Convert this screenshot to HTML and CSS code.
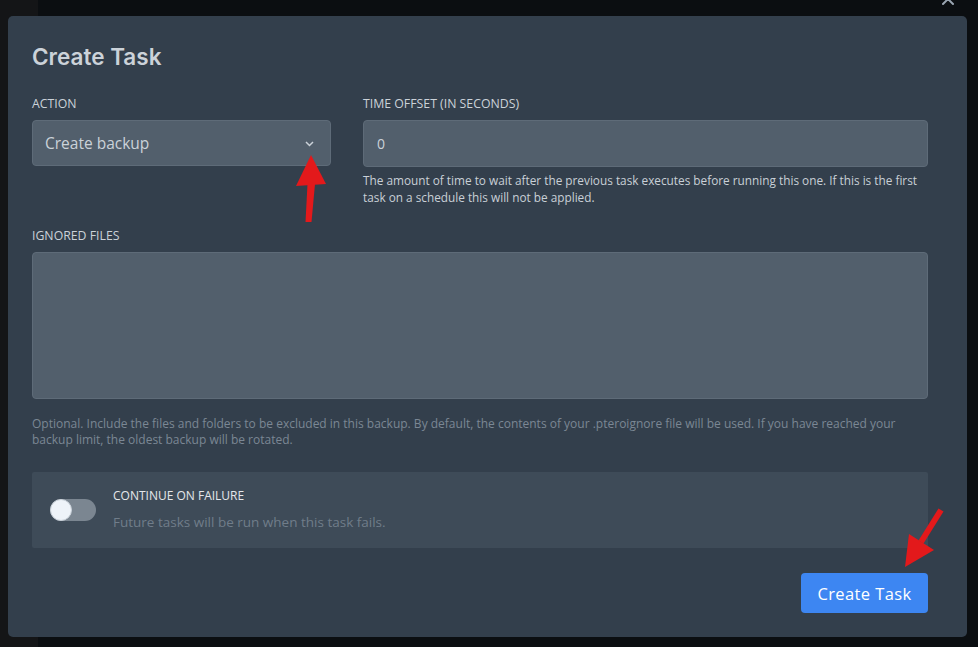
FILE: index.html
```html
<!DOCTYPE html>
<html lang="en">
<head>
<meta charset="utf-8">
<title>Create Task</title>
<link rel="stylesheet" href="styles.css">
</head>
<body>
<div class="backdrop">
  <button class="close" aria-label="Close">
    <svg width="16" height="16" viewBox="0 0 16 16"><path d="M3 3 L13 13 M13 3 L3 13" stroke="#9aa5b1" stroke-width="2" stroke-linecap="round" fill="none"/></svg>
  </button>
  <div class="modal">
    <h2 class="title">Create Task</h2>
    <div class="row">
      <div class="field">
        <label class="label">Action</label>
        <div class="select">
          <span>Create backup</span>
          <svg class="chev" width="9" height="6" viewBox="0 0 9 6"><path d="M1 1 L4.5 4.5 L8 1" stroke="#cbd2d9" stroke-width="1.5" fill="none"/></svg>
        </div>
      </div>
      <div class="field">
        <label class="label">Time offset (in seconds)</label>
        <div class="input">0</div>
        <p class="help">The amount of time to wait after the previous task executes before running this one. If this is the first task on a schedule this will not be applied.</p>
      </div>
    </div>
    <div class="field ignored">
      <label class="label">Ignored files</label>
      <div class="textarea"></div>
      <p class="help dim">Optional. Include the files and folders to be excluded in this backup. By default, the contents of your .pteroignore file will be used. If you have reached your backup limit, the oldest backup will be rotated.</p>
    </div>
    <div class="switch-box">
      <div class="toggle"><span class="knob"></span></div>
      <div class="switch-text">
        <div class="switch-title">Continue on failure</div>
        <div class="switch-desc">Future tasks will be run when this task fails.</div>
      </div>
    </div>
    <div class="actions">
      <button class="btn">Create Task</button>
    </div>
  </div>
  <svg class="annot" width="978" height="647" viewBox="0 0 978 647">
    <polygon points="311,155 296,186 326,184" fill="#e3191b"/>
    <polygon points="307.5,184 315,184 311.5,222 305.5,222" fill="#e3191b"/>
    <polygon points="905,567 909,534 934,550" fill="#e3191b"/>
    <polygon points="918.5,540.4 923.5,543.6 943.5,511.6 938.5,508.4" fill="#e3191b"/>
  </svg>
</div>
</body>
</html>
```

FILE: styles.css
```css
* { box-sizing: border-box; }
html, body { margin: 0; padding: 0; }
body {
  width: 978px;
  height: 647px;
  overflow: hidden;
  background: #0c0f12;
  font-family: "Open Sans", "Noto Sans", sans-serif;
}
.backdrop {
  position: relative;
  width: 978px;
  height: 647px;
  padding: 16px 11px 10px 8px;
  background: linear-gradient(90deg, #141517 0, #141517 38px, #0b0e11 38px);
}
.close {
  position: absolute;
  left: 940px;
  top: -9px;
  width: 16px;
  height: 16px;
  padding: 0;
  border: 0;
  background: none;
}
.modal {
  background: #333f4c;
  border-radius: 5px;
  height: 621px;
  padding: 24px 39px 24px 24px;
}
.title {
  margin: 0 0 22px;
  font-family: "Inter", "Open Sans", sans-serif;
  font-weight: 600;
  font-size: 22.5px;
  line-height: 34px;
  color: #cbd2d9;
}
.row {
  display: grid;
  grid-template-columns: 299px 1fr;
  column-gap: 32px;
}
.field { display: flex; flex-direction: column; }
.label {
  font-size: 12.3px;
  line-height: 16px;
  text-transform: uppercase;
  color: #cbd2d9;
  margin-bottom: 8px;
}
.select, .input {
  display: flex;
  align-items: center;
  background: #525f6c;
  border: 1px solid #5e6b78;
  border-radius: 4px;
  color: #cbd2d9;
}
.select {
  height: 46px;
  padding: 0 16px 0 12px;
  justify-content: space-between;
  font-size: 15.5px;
}
.chev { margin-top: 1px; }
.input {
  height: 47px;
  padding: 0 13px;
  font-size: 14px;
}
.help {
  margin: 5px 0 0;
  font-size: 11.8px;
  line-height: 16.5px;
  color: #c9d0d7;
}
.help.dim { color: #7b8794; margin-top: 17px; line-height: 16px; font-size: 12px; }
.ignored { margin-top: 23px; }
.textarea {
  height: 147px;
  background: #525f6c;
  border: 1px solid #5e6b78;
  border-radius: 4px;
}
.switch-box {
  margin-top: 24px;
  height: 76px;
  background: #3e4b58;
  border-radius: 2px;
  display: flex;
  align-items: center;
  padding-left: 18px;
  gap: 17px;
}
.toggle {
  position: relative;
  width: 46px;
  height: 22px;
  border-radius: 11px;
  background: #7b8691;
}
.knob {
  position: absolute;
  left: 0;
  top: 0;
  width: 22px;
  height: 22px;
  border-radius: 50%;
  background: #eef3f9;
  border: 1px solid #c8d0d8;
}
.switch-text { display: flex; flex-direction: column; gap: 8px; margin-top: -1px; }
.switch-title {
  font-size: 12px;
  line-height: 16px;
  text-transform: uppercase;
  color: #e4e7eb;
}
.switch-desc {
  font-size: 13.5px;
  line-height: 20px;
  color: #707d8a;
}
.actions {
  display: flex;
  justify-content: flex-end;
  margin-top: 25px;
}
.btn {
  width: 127px;
  height: 40px;
  border: 0;
  border-radius: 4px;
  background: #3d86f2;
  color: #ffffff;
  font-family: "Open Sans", sans-serif;
  font-size: 16.5px;
  letter-spacing: 0.4px;
}
.annot {
  position: absolute;
  left: 0;
  top: 0;
  pointer-events: none;
}
```
